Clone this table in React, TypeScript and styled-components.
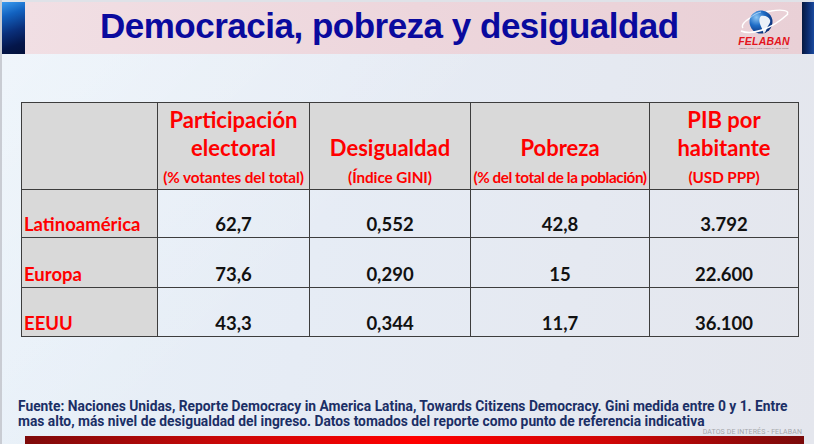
import React from 'react';
import styled, { createGlobalStyle } from 'styled-components';

const GlobalStyle = createGlobalStyle`
  html, body {
    margin: 0;
    padding: 0;
    width: 814px;
    height: 444px;
    overflow: hidden;
  }
`;

const Slide = styled.div`
  width: 814px;
  height: 444px;
  display: flex;
  flex-direction: column;
  box-sizing: border-box;
  border-left: 2px solid #c9ccd3;
  background:
    linear-gradient(135deg, rgba(255, 255, 255, 0.35) 0%, rgba(255, 255, 255, 0) 45%),
    linear-gradient(100deg, #e8f1f9 0%, #e6ecf5 40%, #e4e6ed 100%);
  font-family: Lato, 'Liberation Sans', sans-serif;
`;

const TopStrip = styled.div`
  height: 2px;
  background: #dfe2e8;
`;

const Header = styled.div`
  display: flex;
  height: 52px;
`;

const LeftBlock = styled.div`
  width: 23px;
  background: linear-gradient(160deg, #3a9cf0 0%, #1262c0 25%, #0a2f7a 55%, #04164a 80%, #03113a 100%);
`;

const RightBlock = styled.div`
  width: 12px;
  background: linear-gradient(90deg, #06183f 0%, #0c2c70 50%, #1a4a9e 100%);
`;

const Band = styled.div`
  flex: 1;
  display: flex;
  justify-content: space-between;
  align-items: flex-start;
  padding: 0 11px 0 75px;
  background: linear-gradient(100deg, #f1dfe4 0%, #edd6dc 50%, #e9d0d6 100%);
`;

const Title = styled.h1`
  margin: 0;
  font-family: 'Liberation Sans', Arial, sans-serif;
  font-weight: 700;
  font-size: 35px;
  line-height: 47px;
  letter-spacing: -0.5px;
  color: #0a0a9e;
  white-space: nowrap;
`;

const Logo = styled.div`
  display: flex;
  flex-direction: column;
  align-items: center;
  width: 54px;
  padding-top: 4px;
`;

const LogoWord = styled.span`
  font-family: 'Liberation Sans', Arial, sans-serif;
  font-style: italic;
  font-weight: 700;
  font-size: 10.5px;
  line-height: 10px;
  letter-spacing: 0.2px;
  color: #e3141c;
`;

const Content = styled.div`
  flex: 1;
  display: flex;
  flex-direction: column;
`;

const Table = styled.table`
  margin: 48px 0 0 19px;
  width: 777px;
  border-collapse: collapse;
  table-layout: fixed;
`;

const HeadCell = styled.th`
  height: 84px;
  padding: 0 0 2px;
  border: 1px solid #3d3d3d;
  background: #d9d9d9;
  vertical-align: bottom;
  text-align: center;
  color: #ff0000;
  font-weight: 700;
`;

const HeadMain = styled.div`
  font-size: 22px;
  line-height: 28px;
`;

const HeadSub = styled.div<{ tight?: boolean }>`
  margin-top: 6px;
  font-size: 15.3px;
  line-height: 19px;
  white-space: nowrap;
  letter-spacing: ${({ tight }) => (tight ? '-0.45px' : '-0.1px')};
`;

const LabelCell = styled.td`
  padding: 0 0 2px 2px;
  border: 1px solid #3d3d3d;
  background: #d9d9d9;
  vertical-align: bottom;
  text-align: left;
  font-size: 18.5px;
  line-height: 21px;
  font-weight: 700;
  color: #ff0000;
`;

const ValueCell = styled.td`
  padding: 0 0 2px;
  border: 1px solid #3d3d3d;
  vertical-align: bottom;
  text-align: center;
  font-size: 18.5px;
  line-height: 21px;
  font-weight: 700;
  color: #111111;
`;

const Row = styled.tr<{ h: number }>`
  height: ${({ h }) => h}px;
`;

const Footer = styled.div`
  margin-top: auto;
  padding-left: 16px;
  font-family: Roboto, 'Liberation Sans', sans-serif;
  font-weight: 700;
  font-size: 13.8px;
  line-height: 15px;
  color: #1b2f66;
  white-space: nowrap;
`;

const Credit = styled.div`
  height: 7px;
  padding-right: 12px;
  text-align: right;
  font-family: Roboto, 'Liberation Sans', sans-serif;
  font-size: 7px;
  line-height: 7px;
  color: #a6a7ac;
  letter-spacing: 0.1px;
`;

const RedBar = styled.div`
  height: 8px;
  margin: 0 10px 0 23px;
  background: linear-gradient(90deg, #7e0a0a 0%, #c80808 25%, #ff0000 50%, #d00606 75%, #7a0a0a 100%);
`;

const Globe = () => (
  <svg width="54" height="30" viewBox="0 0 54 30">
    <defs>
      <radialGradient id="gl" cx="0.3" cy="0.3" r="0.8">
        <stop offset="0" stopColor="#8cc6f4" />
        <stop offset="0.45" stopColor="#1e6cc6" />
        <stop offset="1" stopColor="#08286e" />
      </radialGradient>
    </defs>
    <path d="M6 22 C2 17 18 7 34 5 C46 3 53 5 50 8" fill="none" stroke="#ffffff" strokeWidth="1.4" />
    <circle cx="24" cy="16" r="11.5" fill="url(#gl)" />
    <path d="M24 10 C28 9 32 11 33 14 C34 17 31 19 30 22 C29 25 28 27 26.5 27.5 C26 24 24 21 23 18 C22 15 22 12 24 10 Z" fill="#eaf0f8" />
    <path d="M13 12 C16 9 20 7 24 6" fill="none" stroke="#b8dcfa" strokeWidth="0.8" />
    <path d="M4 25 C14 29 32 25 51 8" fill="none" stroke="#ffffff" strokeWidth="1.6" />
  </svg>
);

const rows = [
  { label: 'Latinoamérica', values: ['62,7', '0,552', '42,8', '3.792'], h: 48 },
  { label: 'Europa', values: ['73,6', '0,290', '15', '22.600'], h: 50 },
  { label: 'EEUU', values: ['43,3', '0,344', '11,7', '36.100'], h: 49 },
];

export default function App() {
  return (
    <>
      <GlobalStyle />
      <Slide>
        <TopStrip />
        <Header>
          <LeftBlock />
          <Band>
            <Title>Democracia, pobreza y desigualdad</Title>
            <Logo>
              <Globe />
              <LogoWord>FELABAN</LogoWord>
              <svg width="54" height="4" viewBox="0 0 54 4">
                <text x="27" y="3" textAnchor="middle" fontSize="2.2" fill="#8a6a70" fontFamily="Liberation Sans">
                  FEDERACIÓN LATINOAMERICANA DE BANCOS
                </text>
              </svg>
            </Logo>
          </Band>
          <RightBlock />
        </Header>
        <Content>
          <Table>
            <colgroup>
              <col style={{ width: 136 }} />
              <col style={{ width: 152 }} />
              <col style={{ width: 161 }} />
              <col style={{ width: 179 }} />
              <col style={{ width: 149 }} />
            </colgroup>
            <thead>
              <Row h={84}>
                <HeadCell />
                <HeadCell>
                  <HeadMain>Participación</HeadMain>
                  <HeadMain>electoral</HeadMain>
                  <HeadSub>(% votantes del total)</HeadSub>
                </HeadCell>
                <HeadCell>
                  <HeadMain>Desigualdad</HeadMain>
                  <HeadSub>(Índice GINI)</HeadSub>
                </HeadCell>
                <HeadCell>
                  <HeadMain>Pobreza</HeadMain>
                  <HeadSub tight>(% del total de la población)</HeadSub>
                </HeadCell>
                <HeadCell>
                  <HeadMain>PIB por</HeadMain>
                  <HeadMain>habitante</HeadMain>
                  <HeadSub>(USD PPP)</HeadSub>
                </HeadCell>
              </Row>
            </thead>
            <tbody>
              {rows.map((r) => (
                <Row key={r.label} h={r.h}>
                  <LabelCell>{r.label}</LabelCell>
                  {r.values.map((v, i) => (
                    <ValueCell key={i}>{v}</ValueCell>
                  ))}
                </Row>
              ))}
            </tbody>
          </Table>
          <Footer>
            <div>
              Fuente: Naciones Unidas, Reporte Democracy in America Latina, Towards Citizens Democracy. Gini medida entre 0 y 1. Entre
            </div>
            <div>mas alto, más nivel de desigualdad del ingreso. Datos tomados del reporte como punto de referencia indicativa</div>
          </Footer>
          <Credit>DATOS DE INTERÉS - FELABAN</Credit>
          <RedBar />
        </Content>
      </Slide>
    </>
  );
}
